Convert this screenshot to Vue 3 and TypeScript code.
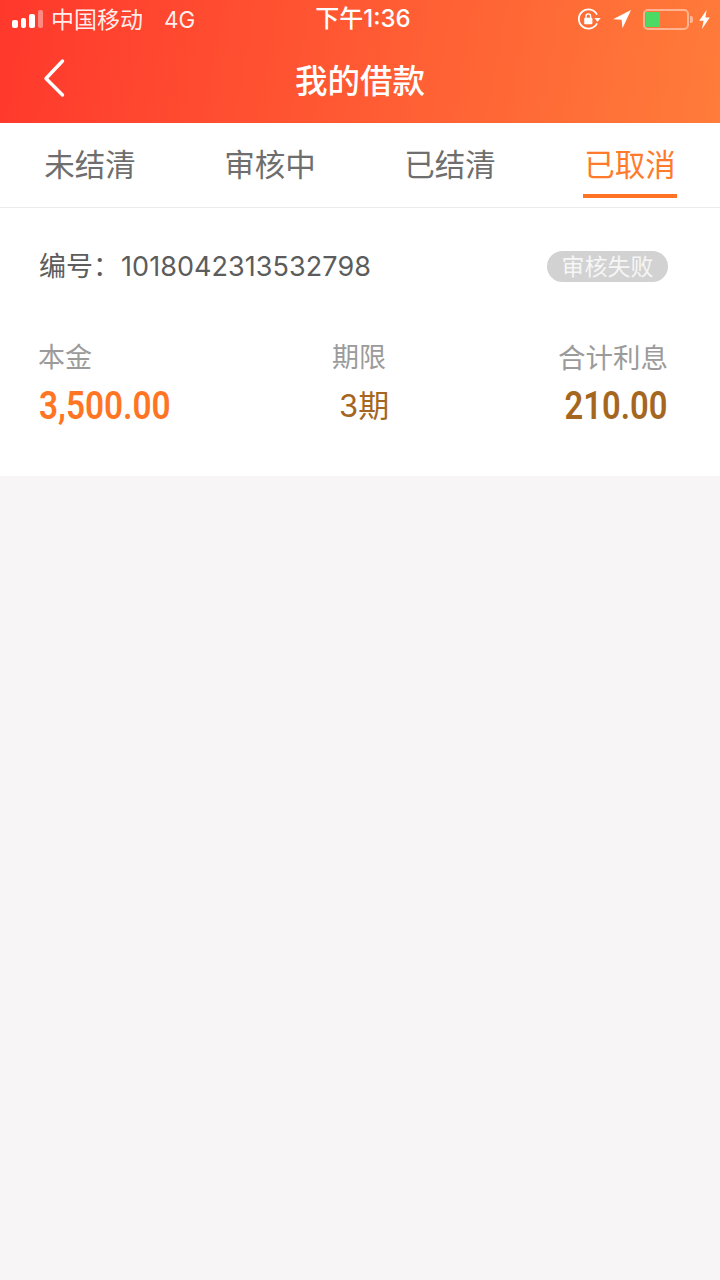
<script setup lang="ts">
// Loan list screen, "cancelled" tab selected.
const tabs = [
  { label: "未结清", active: false },
  { label: "审核中", active: false },
  { label: "已结清", active: false },
  { label: "已取消", active: true },
];
const signal = [8, 10, 14, 18];
</script>

<template>
  <div class="page">
    <header class="head">
      <div class="status">
        <div class="status-left">
          <div class="signal">
            <i v-for="(h, i) in signal" :key="i" :class="{ dim: i === 3 }" :style="{ height: `${h}px` }" />
          </div>
          <span class="carrier">中国移动</span>
          <span class="net">4G</span>
        </div>
        <span class="clock">下午1:36</span>
        <div class="status-right">
          <svg class="lock" width="24" height="24" viewBox="0 0 24 24" fill="none">
            <path d="M20 7.6A9.6 9.6 0 1 0 20 16.4" stroke="#fff" stroke-width="1.8" />
            <path d="M17.4 11h6.2l-3.1 4z" fill="#fff" />
            <rect x="7.2" y="10.8" width="8.2" height="6.4" rx="1" fill="#fff" />
            <path d="M9 11V9.2a2.3 2.3 0 0 1 4.6 0V11" stroke="#fff" stroke-width="1.4" />
          </svg>
          <svg class="arrow" width="20" height="20" viewBox="0 0 20 20">
            <path d="M19 1 1 10.2l8.6.6.9 8.4z" fill="#fff" />
          </svg>
          <div class="battery">
            <div class="cell"><b /></div>
            <i />
          </div>
          <svg class="bolt" width="11" height="19" viewBox="0 0 11 19">
            <path d="M7.6 0 .2 10.8h4.4L3 19l7.8-11.6H6.4z" fill="#fff" />
          </svg>
        </div>
      </div>
      <div class="nav">
        <svg class="back" width="26" height="40" viewBox="0 0 26 40" fill="none">
          <path d="M20.5 3 4 20.5 20.5 37" stroke="#fff" stroke-width="3.4" stroke-linecap="round" stroke-linejoin="round" />
        </svg>
        <h1>我的借款</h1>
      </div>
    </header>

    <nav class="tabs">
      <div v-for="t in tabs" :key="t.label" class="tab" :class="{ on: t.active }">
        <span>{{ t.label }}</span>
      </div>
    </nav>

    <section class="card">
      <div class="top">
        <span class="no">编号：<em>1018042313532798</em></span>
        <span class="badge">审核失败</span>
      </div>
      <div class="cols">
        <div class="col">
          <label>本金</label>
          <strong class="orange">3,500.00</strong>
        </div>
        <div class="col mid">
          <label>期限</label>
          <span class="term">3期</span>
        </div>
        <div class="col end">
          <label>合计利息</label>
          <strong class="brown">210.00</strong>
        </div>
      </div>
    </section>
  </div>
</template>

<style scoped>
.page {
  min-height: 1280px;
  background: #f7f5f6;
  font-family: "Noto Sans CJK SC", "Liberation Sans", sans-serif;
}
.head {
  height: 123px;
  color: #fff;
  background: linear-gradient(100deg, #ff382c 0%, #ff7c3a 100%);
}
.status {
  height: 40px;
  display: grid;
  grid-template-columns: 1fr auto 1fr;
  align-items: center;
  padding: 0 10px 2px 12px;
  box-sizing: border-box;
}
.status-left {
  display: flex;
  align-items: center;
}
.signal {
  display: flex;
  align-items: flex-end;
  gap: 3px;
  height: 18px;
  margin-right: 8px;
}
.signal i {
  width: 5.5px;
  border-radius: 2px;
  background: #fff;
}
.signal i.dim {
  background: rgba(255, 255, 255, 0.4);
}
.carrier {
  font-size: 23px;
  line-height: 28px;
  margin-bottom: 2px;
  color: rgba(255, 255, 255, 0.92);
}
.net {
  font-family: Inter, "Liberation Sans", sans-serif;
  font-size: 22.5px;
  margin-left: 21px;
  color: rgba(255, 255, 255, 0.92);
}
.clock {
  font-family: Inter, "Noto Sans CJK SC", sans-serif;
  font-size: 24px;
  font-weight: 500;
  line-height: 30px;
  margin-left: 4px;
}
.status-right {
  display: flex;
  align-items: center;
  justify-content: flex-end;
}
.arrow {
  margin-left: 11px;
}
.battery {
  display: flex;
  align-items: center;
  margin-left: 11px;
}
.cell {
  width: 46px;
  height: 21px;
  padding: 1px;
  box-sizing: border-box;
  border: 2px solid rgba(255, 255, 255, 0.45);
  border-radius: 5px;
}
.cell b {
  display: block;
  width: 14px;
  height: 100%;
  background: #4cd964;
}
.battery i {
  width: 3px;
  height: 7px;
  margin-left: 1px;
  border-radius: 0 2px 2px 0;
  background: rgba(255, 255, 255, 0.45);
}
.bolt {
  margin-left: 6px;
}
.nav {
  position: relative;
  height: 83px;
  display: flex;
  align-items: center;
  justify-content: center;
  padding-bottom: 6px;
  box-sizing: border-box;
}
.back {
  position: absolute;
  left: 42px;
  top: 18px;
}
h1 {
  margin: 0;
  font-size: 32.5px;
  font-weight: 500;
  line-height: 44px;
}
.tabs {
  display: grid;
  grid-template-columns: repeat(4, 180px);
  height: 84px;
  background: #fff;
}
.tab {
  display: flex;
  justify-content: center;
  font-size: 30.5px;
  color: #6e6e6e;
}
.tab span {
  height: 71px;
  padding: 0 1px;
  line-height: 80px;
}
.tab.on {
  color: #ff7a2b;
}
.tab.on span {
  border-bottom: 4px solid #ff7324;
}
.card {
  height: 269px;
  box-sizing: border-box;
  padding: 0 52px 0 39px;
  background: #fff;
  border-top: 1px solid #ebebeb;
}
.top {
  display: flex;
  justify-content: space-between;
  align-items: center;
  height: 116px;
}
.no {
  font-size: 27px;
  line-height: 36px;
  color: #5c5c5c;
}
.no em {
  font-family: Inter, "Liberation Sans", sans-serif;
  font-style: normal;
  font-size: 27px;
  margin-left: 1px;
  letter-spacing: 0.06px;
}
.badge {
  width: 121px;
  height: 31px;
  border-radius: 16px;
  background: #d2d2d2;
  color: #f6f6f6;
  font-size: 23px;
  line-height: 29px;
  text-align: center;
}
.cols {
  display: grid;
  grid-template-columns: 294px 1fr auto;
  margin-top: 14px;
}
.col {
  display: flex;
  flex-direction: column;
  align-items: flex-start;
}
.col label {
  font-size: 27px;
  line-height: 36px;
  margin-left: -1px;
  color: #9b9b9b;
}
.col.end {
  align-items: flex-end;
}
.col.end label {
  font-size: 27.5px;
  margin-left: 0;
}
.col strong {
  font-family: Roboto, sans-serif;
  font-size: 39px;
  font-weight: 600;
  line-height: 50px;
  margin-top: 7px;
  transform: scaleX(0.855);
  transform-origin: left center;
}
.col.end strong {
  margin-right: 1px;
  transform-origin: right center;
  transform: scaleX(0.84);
}
.term {
  font-family: Inter, "Noto Sans CJK SC", sans-serif;
  font-size: 31px;
  line-height: 50px;
  margin: 7px 0 0 6px;
  color: #a5661f;
}
.orange {
  color: #ff7524;
}
.brown {
  color: #a5661f;
}
</style>

<style>
body {
  background: #f7f5f6;
}
</style>
